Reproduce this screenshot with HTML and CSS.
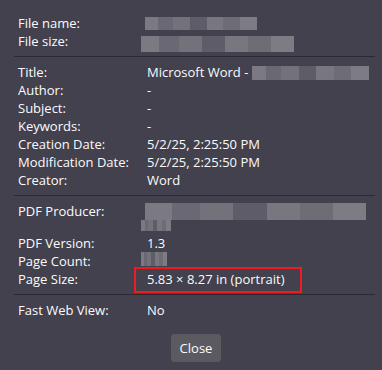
FILE: index.html
```html
<!DOCTYPE html>
<html lang="en">

<head>
    <meta charset="UTF-8">
    <meta name="viewport" content="width=device-width, initial-scale=1.0">
    <title>Document Properties</title>
    <link rel="stylesheet" href="styles.css">
</head>

<body>
    <div class="dialog">
        <div class="row"><span class="label">File name:</span><span class="value"><span class="blur blurName"></span></span></div>
        <div class="row"><span class="label">File size:</span><span class="value"><span class="blur blurSize"></span></span></div>
        <div class="separator"></div>
        <div class="row"><span class="label">Title:</span><span class="value">Microsoft Word - <span class="blur blurTitle"></span></span></div>
        <div class="row"><span class="label">Author:</span><span class="value">-</span></div>
        <div class="row"><span class="label">Subject:</span><span class="value">-</span></div>
        <div class="row"><span class="label">Keywords:</span><span class="value">-</span></div>
        <div class="row"><span class="label">Creation Date:</span><span class="value">5/2/25, 2:25:50 PM</span></div>
        <div class="row"><span class="label">Modification Date:</span><span class="value">5/2/25, 2:25:50 PM</span></div>
        <div class="row"><span class="label">Creator:</span><span class="value">Word</span></div>
        <div class="separator"></div>
        <div class="row tall"><span class="label">PDF Producer:</span><span class="value"><span class="blur blurProducer"></span><span class="blur blurProducer2"></span></span></div>
        <div class="row"><span class="label">PDF Version:</span><span class="value">1.3</span></div>
        <div class="row"><span class="label">Page Count:</span><span class="value"><span class="blur blurCount"></span></span></div>
        <div class="row"><span class="label">Page Size:</span><span class="value"><span class="highlight">5.83 × 8.27 in (portrait)</span></span></div>
        <div class="separator"></div>
        <div class="row"><span class="label">Fast Web View:</span><span class="value">No</span></div>
        <div class="buttons">
            <button type="button">Close</button>
        </div>
    </div>
</body>

</html>
```

FILE: styles.css
```css
body {
    margin: 0;
    background-color: #42414d;
    font-family: "Open Sans", "Noto Sans", sans-serif;
    font-size: 13px;
    color: #fbfbfe;
}

.dialog {
    padding: 14px 7px 8px 14px;
    display: flex;
    flex-direction: column;
}

.row {
    display: flex;
    height: 18px;
    line-height: 18px;
    padding-left: 4px;
}

.row.tall {
    height: 32px;
}

.label {
    width: 129px;
    flex-shrink: 0;
}

.value {
    display: flex;
    align-items: center;
    position: relative;
    white-space: pre;
}

.separator {
    height: 1px;
    background: #2b2a33;
    margin: 6px 0;
}

/* pixelated placeholders for hidden values */
.blur {
    display: block;
    height: 15px;
    background:
        linear-gradient(90deg, rgba(255, 255, 255, 0.18) 0 12%, rgba(255, 255, 255, 0.05) 12% 25%, rgba(255, 255, 255, 0.12) 25% 40%, rgba(0, 0, 0, 0.06) 40% 55%, rgba(255, 255, 255, 0.16) 55% 70%, rgba(255, 255, 255, 0.08) 70% 85%, rgba(255, 255, 255, 0.2) 85% 100%),
        #6a6973;
    opacity: 0.85;
}

.blurName {
    width: 112px;
    height: 13px;
    margin-left: -2px;
}

.blurSize {
    width: 153px;
    height: 16px;
    margin-left: -6px;
    margin-top: 6px;
}

.blurTitle {
    width: 117px;
    height: 14px;
    margin-top: 2px;
}

.blurProducer {
    position: absolute;
    left: -2px;
    top: 1px;
    width: 221px;
    height: 17px;
}

.blurProducer2 {
    position: absolute;
    left: -6px;
    top: 18px;
    width: 30px;
    height: 11px;
}

.blurCount {
    width: 26px;
    height: 14px;
    margin-left: -6px;
    align-self: flex-start;
}

.highlight {
    position: relative;
}

.highlight::after {
    content: "";
    position: absolute;
    left: -13px;
    top: -3px;
    width: 164px;
    height: 22px;
    border: 2px solid #ee1d1d;
}

.buttons {
    display: flex;
    justify-content: center;
    margin-top: 15px;
    padding-left: 3px;
}

button {
    width: 50px;
    height: 28px;
    background: #5b5a61;
    color: #fbfbfe;
    border: none;
    border-radius: 3px;
    font-family: inherit;
    font-size: 13px;
    padding: 0;
}
```
